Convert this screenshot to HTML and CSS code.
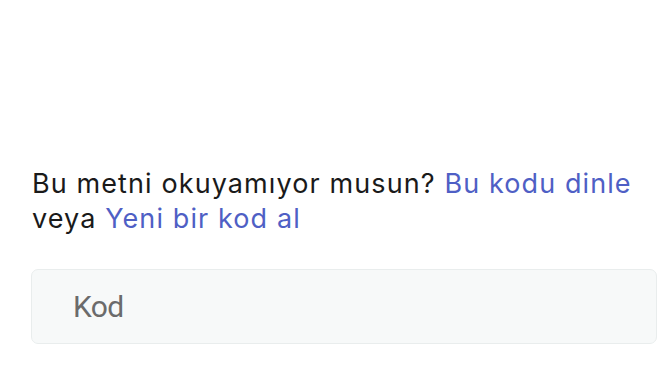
FILE: index.html
```html
<!DOCTYPE html>
<html lang="tr">
<head>
  <meta charset="UTF-8" />
  <meta name="viewport" content="width=device-width, initial-scale=1.0"/>
  <title>Kod doğrulama</title>
  <link rel="stylesheet" href="styles.css">
</head>
<body>
  <div class="captcha">
    <p class="hint">
      Bu metni okuyamıyor musun? <a href="#">Bu kodu dinle</a>
      veya <a href="#">Yeni bir kod al</a>
    </p>
    <input class="code-input" type="text" placeholder="Kod">
  </div>
</body>
</html>
```

FILE: styles.css
```css
* {
  box-sizing: border-box;
  padding: 0;
  margin: 0;
}

body {
  font-family: Inter, 'Noto Sans', sans-serif;
  background: #fff;
  color: #1a1a1a;
}

.captcha {
  padding: 166px 15px 0 31px;
}

.hint {
  font-size: 27px;
  letter-spacing: 1.1px;
  line-height: 35px;
  padding-left: 1px;
  margin-bottom: 33px;
}

.hint a {
  color: #4f5fc5;
  text-decoration: none;
}

.code-input {
  display: block;
  width: 100%;
  height: 75px;
  padding: 0 41px;
  background: #f7f9f9;
  border: 1px solid #e9eded;
  border-radius: 7px;
  font-family: Roboto, sans-serif;
  font-size: 30px;
  letter-spacing: -0.6px;
  color: #333;
  outline: none;
}

.code-input::placeholder {
  color: #6b6b6b;
}
```
